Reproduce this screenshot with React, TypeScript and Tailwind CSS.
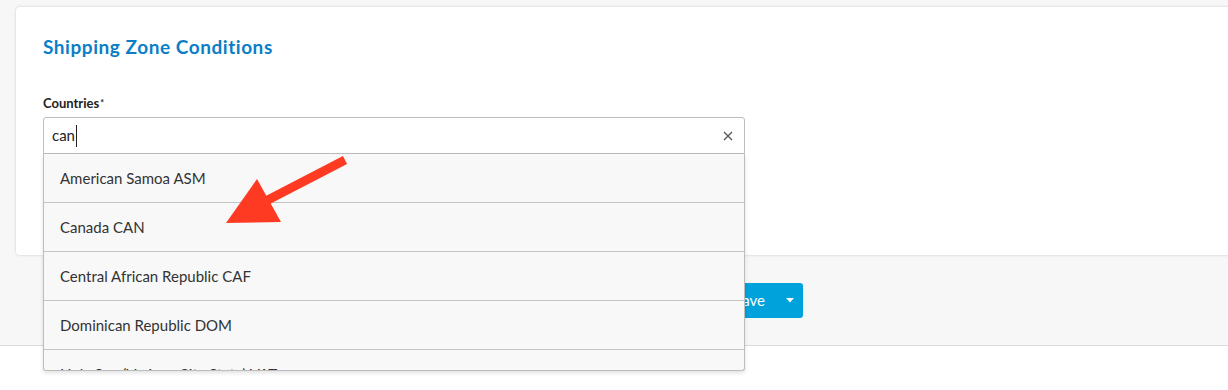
import React from "react";

const items = [
  "American Samoa ASM",
  "Canada CAN",
  "Central African Republic CAF",
  "Dominican Republic DOM",
  "Holy See (Vatican City State) VAT",
];

export default function App() {
  return (
    <div className="relative w-[1228px] h-[390px] overflow-hidden bg-white font-['Lato',sans-serif] text-[#333]">
      <div className="bg-[#f7f7f7] border-b border-[#dcdcdc]">
        <div className="pt-[7px] pl-[16px]">
          <div className="h-[248px] -mr-[10px] bg-white rounded-[4px] shadow-[0_0_3px_rgba(0,0,0,0.18)] pt-[28px] pl-[27px]">
            <h2 className="text-[19px] leading-[24px] tracking-[0.55px] font-bold text-[#0a7ec6]">Shipping Zone Conditions</h2>
            <div className="mt-[36px] text-[13px] leading-[16px] font-bold text-[#222]">
              Countries<span className="text-[9px] align-top ml-[1px]">*</span>
            </div>
            <div className="relative mt-[6px] w-[702px]">
              <div className="h-[37px] border border-[#bdbdbd] rounded-t-[3px] flex items-center pl-[8px] pr-[10px]">
                <span className="text-[15px] text-[#222]">can</span>
                <span className="w-[1px] h-[22px] bg-[#222] ml-[1px]" />
                <span className="flex-1" />
                <svg width="10" height="10" viewBox="0 0 10 10" className="mr-[1px]">
                  <path d="M1 1L9 9M9 1L1 9" stroke="#555" strokeWidth="1.3" />
                </svg>
              </div>
              <div className="absolute left-0 top-full w-[702px] h-[217px] overflow-hidden bg-[#f8f8f8] border-x border-b border-[#bdbdbd] rounded-b-[3px] shadow-[0_2px_4px_rgba(0,0,0,0.12)] z-10">
                {items.map((t) => (
                  <div key={t} className="h-[49px] border-b border-[#c4c4c4] flex items-center pl-[16px] text-[15px] text-[#333]">
                    {t}
                  </div>
                ))}
              </div>
            </div>
          </div>
        </div>
        <div className="h-[90px] w-[803px] flex justify-end items-start pt-[28px]">
          <div className="h-[35px] flex bg-[#00a2dc] rounded-[3px] text-white">
            <div className="pl-[17px] pr-[12px] flex items-center text-[15px]">Save</div>
            <div className="w-[26px] flex items-center justify-center">
              <svg width="8" height="5" viewBox="0 0 8 5">
                <path d="M0 0H8L4 4.5Z" fill="#fff" />
              </svg>
            </div>
          </div>
        </div>
      </div>
      <svg className="absolute left-0 top-0 pointer-events-none z-20" width="1228" height="390">
        <line x1="345" y1="160" x2="262" y2="203" stroke="#ff3a22" strokeWidth="9" />
        <polygon points="257,179 281,222 226,223" fill="#ff3a22" />
      </svg>
    </div>
  );
}
